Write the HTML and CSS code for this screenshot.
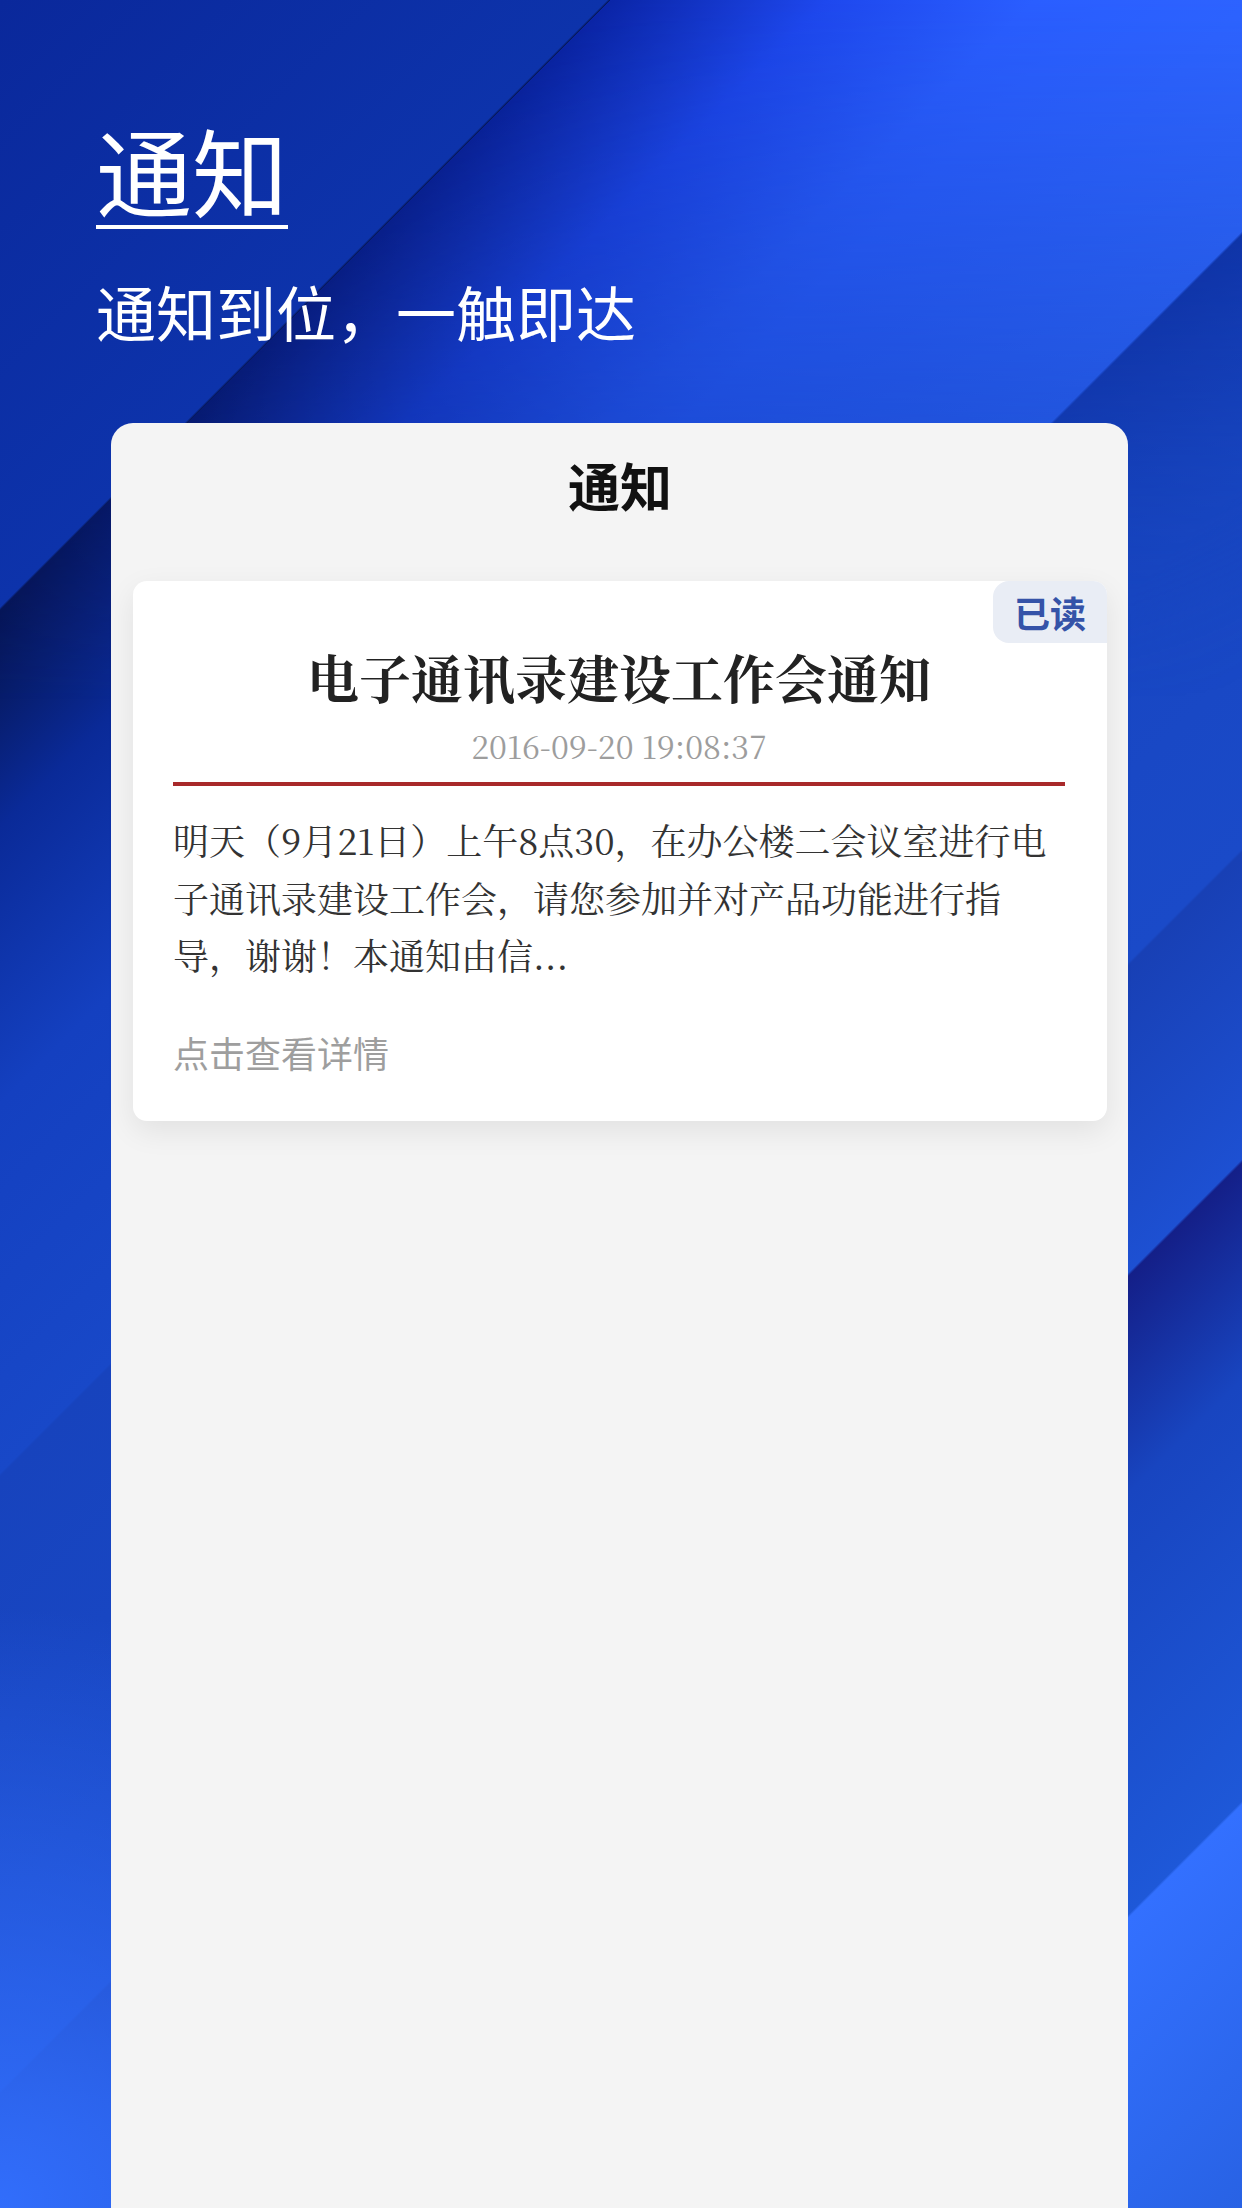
FILE: index.html
```html
<!DOCTYPE html>
<html lang="zh-CN">
<head>
    <meta charset="UTF-8">
    <meta name="viewport" content="width=device-width, initial-scale=1.0">
    <title>通知</title>
    <link rel="stylesheet" href="styles.css">
</head>
<body>
    <div class="page">
        <header class="hero">
            <h1 class="hero-title">通知</h1>
            <p class="hero-sub">通知到位，一触即达</p>
        </header>

        <section class="panel">
            <div class="panel-title">通知</div>

            <div class="notice-card">
                <span class="badge">已读</span>
                <div class="notice-head">
                    <h2 class="notice-title">电子通讯录建设工作会通知</h2>
                    <div class="notice-date">2016-09-20 19:08:37</div>
                </div>
                <p class="notice-body">明天（9月21日）上午8点30，在办公楼二会议室进行电子通讯录建设工作会，请您参加并对产品功能进行指导，谢谢！本通知由信...</p>
                <div class="notice-more">点击查看详情</div>
            </div>
        </section>
    </div>
</body>
</html>
```

FILE: styles.css
```css
body {
    margin: 0;
    font-family: "Noto Sans CJK SC", "Noto Sans", sans-serif;
}
.page {
    position: relative;
    min-height: 2208px;
    overflow: hidden;
    background:
        radial-gradient(circle at 0 100%, rgba(51, 112, 255, 0.95), rgba(51, 112, 255, 0) 600px),
        linear-gradient(135deg,
            #0a289b 0%, #0d33ab 17.6%,
            #05134c 17.7%, #0a2a98 24%, #1440c0 32%, #1848c8 42.7%,
            #1743bd 42.8%, #1846c2 50%, #1a4ac8 60.6%,
            #1840b5 60.7%, #1d50d2 69.6%,
            #141f88 69.7%, #1845c0 76%, #1e58d8 88.2%,
            #3370ff 88.3%, #2862e4 100%);
}
/* brighter top of the second stripe, darker top of the third */
.page::before {
    content: "";
    position: absolute;
    inset: 0;
    background: linear-gradient(135deg,
        transparent 17.7%, #0a25a8 17.7%, #1e48ee 24%, #2a5eff 30%, #3068ff 42.7%,
        #0b2c9c 42.8%, #1440b8 50%, rgba(24, 70, 196, 0) 56%);
    -webkit-mask-image: linear-gradient(180deg, #000 0, rgba(0, 0, 0, 0.5) 350px, transparent 700px);
    mask-image: linear-gradient(180deg, #000 0, rgba(0, 0, 0, 0.5) 350px, transparent 700px);
}
.page > * {
    position: relative;
}
.hero {
    padding: 121px 0 0 96px;
    color: #fff;
}
.hero-title {
    display: inline-block;
    margin: 0;
    padding-bottom: 8px;
    border-bottom: 4px solid #fff;
    font-size: 96px;
    font-weight: 400;
    line-height: 96px;
}
.hero-sub {
    margin: 52px 0 0;
    font-size: 60px;
    line-height: 60px;
}
.panel {
    box-sizing: border-box;
    min-height: 1785px;
    margin: 82px 114px 0 111px;
    padding: 36px 21px 40px 22px;
    background-color: #f4f4f4;
    border-radius: 22px 22px 0 0;
}
.panel-title {
    text-align: center;
    font-size: 52px;
    font-weight: 700;
    line-height: 52px;
    color: #111;
}
.notice-card {
    position: relative;
    margin-top: 70px;
    padding: 70px 42px 51px 40px;
    background-color: #fff;
    border-radius: 14px;
    box-shadow: 0 10px 30px rgba(0, 0, 0, 0.08);
}
.badge {
    position: absolute;
    top: 0;
    right: 0;
    width: 114px;
    height: 62px;
    display: flex;
    justify-content: center;
    align-items: center;
    background-color: #e9edf5;
    color: #3553a8;
    font-size: 36px;
    font-weight: 700;
    border-radius: 16px 14px 0 16px;
}
.notice-head {
    text-align: center;
    padding-bottom: 21px;
    border-bottom: 4px solid #a8292a;
}
.notice-title,
.notice-date,
.notice-body {
    font-family: "Noto Serif CJK SC", "Liberation Serif", "Noto Sans CJK SC", serif;
}
.notice-title {
    margin: 0;
    font-size: 52px;
    font-weight: 700;
    line-height: 52px;
    color: #222;
}
.notice-date {
    margin-top: 26px;
    font-size: 32px;
    line-height: 32px;
    color: #9d9d9d;
}
.notice-body {
    margin: 25px 0 0;
    font-size: 36px;
    line-height: 57.5px;
    color: #333;
}
.notice-more {
    margin-top: 50px;
    font-size: 36px;
    line-height: 36px;
    color: #9e9e9e;
}
```
